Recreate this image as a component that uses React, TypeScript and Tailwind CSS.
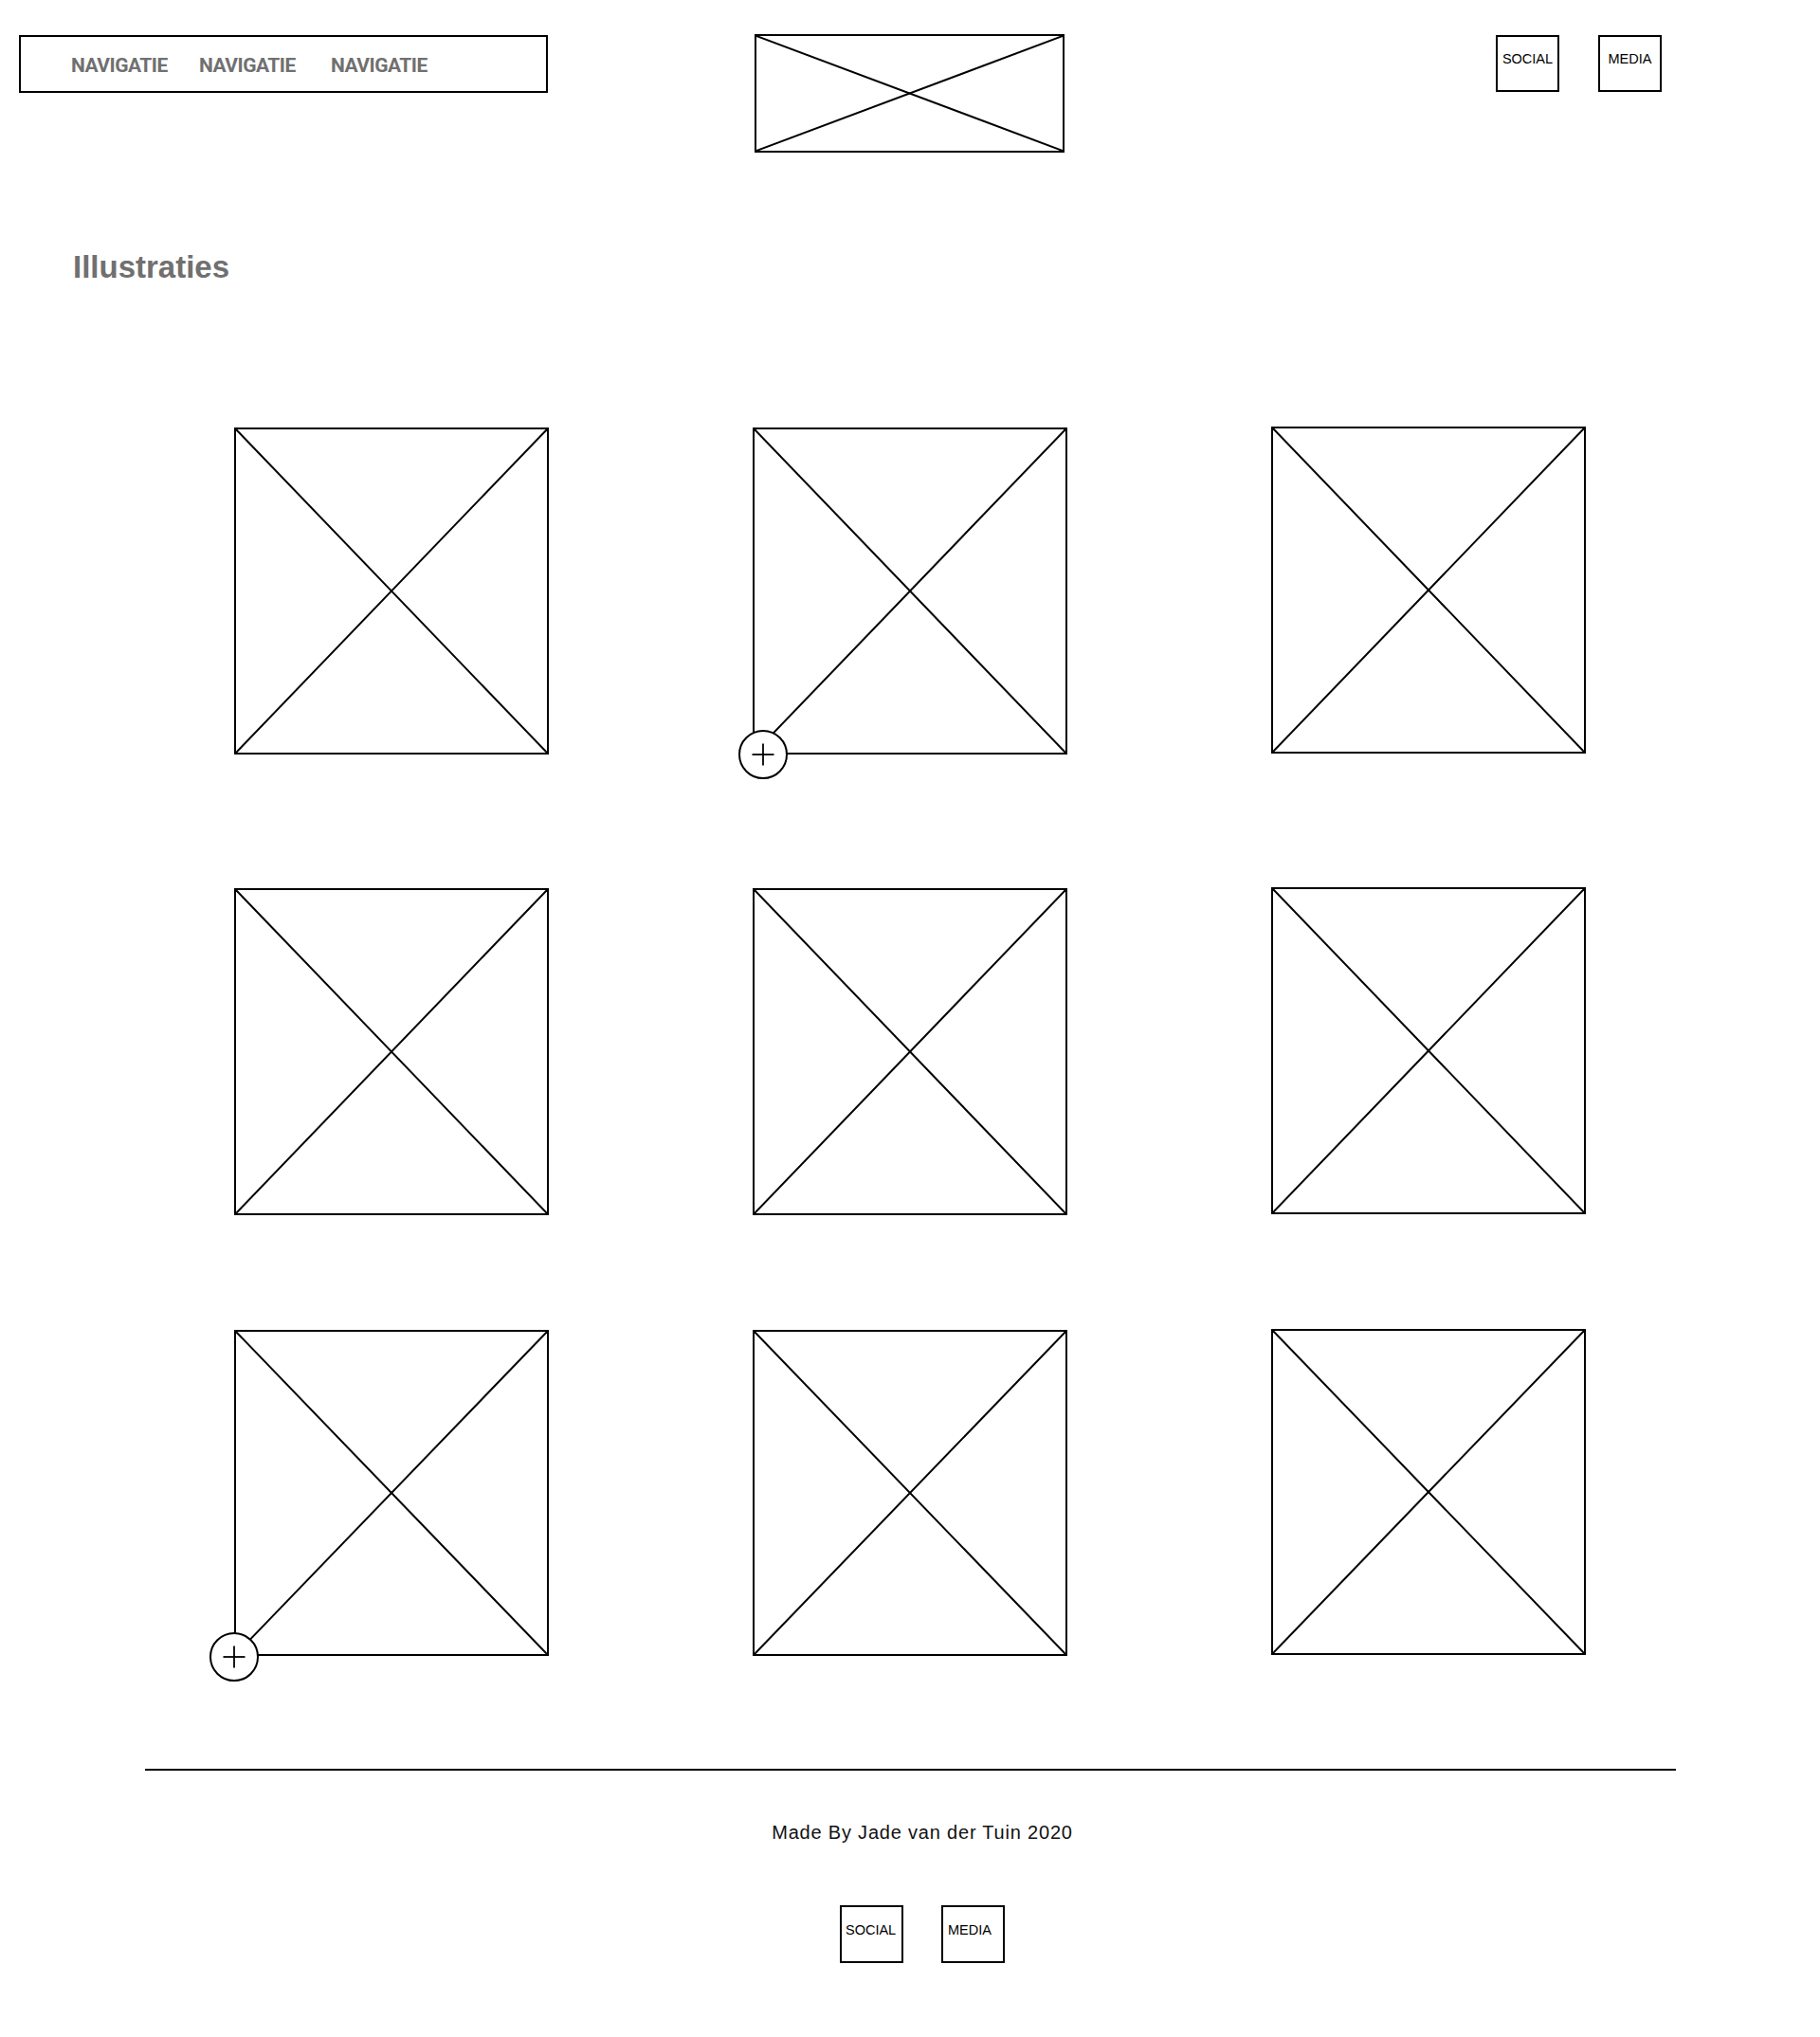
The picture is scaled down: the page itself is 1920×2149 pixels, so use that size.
import React from "react";

function XBox({ className, plus }: { className: string; plus?: "offset" | "corner" }) {
  return (
    <div className={"relative border-2 border-black bg-white " + className}>
      <svg className="block h-full w-full" viewBox="0 0 100 100" preserveAspectRatio="none">
        <line x1="0" y1="0" x2="100" y2="100" stroke="#000" strokeWidth="2" vectorEffect="non-scaling-stroke" />
        <line x1="100" y1="0" x2="0" y2="100" stroke="#000" strokeWidth="2" vectorEffect="non-scaling-stroke" />
      </svg>
      {plus && (
        <div
          className={
            "absolute flex h-[52px] w-[52px] items-center justify-center rounded-full border-2 border-black bg-white " +
            (plus === "offset" ? "left-[-17px] bottom-[-28px]" : "left-[-28px] bottom-[-29px]")
          }
        >
          <svg width="26" height="26" viewBox="0 0 26 26">
            <line x1="1.5" y1="13" x2="24.5" y2="13" stroke="#000" strokeWidth="1.8" />
            <line x1="13" y1="1.5" x2="13" y2="24.5" stroke="#000" strokeWidth="1.8" />
          </svg>
        </div>
      )}
    </div>
  );
}

function SmallBox({ label, className }: { label: string; className: string }) {
  return (
    <div
      className={"flex border-2 border-black text-[14.5px] leading-[17px] text-black " + className}
      style={{ fontFamily: '"Liberation Sans", Arial, sans-serif' }}
    >
      {label}
    </div>
  );
}

export default function App() {
  const rows = [
    ["h-[345px]", "mt-[153px]"],
    ["h-[345px]", "mt-[141px]"],
    ["h-[344px]", "mt-[121px]"],
  ];
  const nav = { fontFamily: "Roboto, sans-serif" };
  return (
    <div className="min-h-[2149px] w-[1920px] bg-white" style={{ fontFamily: '"Liberation Sans", Arial, sans-serif' }}>
      {/* Header */}
      <div className="flex items-start pl-[20px]">
        <div className="mt-[37px] flex h-[61px] w-[558px] items-center border-2 border-black pl-[53px] pt-[5px]">
          <span className="w-[135px] text-[21px] font-bold tracking-[-0.5px] text-[#707070]" style={nav}>NAVIGATIE</span>
          <span className="w-[139px] text-[21px] font-bold tracking-[-0.5px] text-[#707070]" style={nav}>NAVIGATIE</span>
          <span className="text-[21px] font-bold tracking-[-0.5px] text-[#707070]" style={nav}>NAVIGATIE</span>
        </div>
        <div className="ml-[218px] mt-[36px] h-[125px] w-[327px] border-2 border-black">
          <svg className="block h-full w-full" viewBox="0 0 100 100" preserveAspectRatio="none">
            <line x1="0" y1="0" x2="100" y2="100" stroke="#000" strokeWidth="2" vectorEffect="non-scaling-stroke" />
            <line x1="100" y1="0" x2="0" y2="100" stroke="#000" strokeWidth="2" vectorEffect="non-scaling-stroke" />
          </svg>
        </div>
        <SmallBox label="SOCIAL" className="ml-[455px] mt-[37px] h-[60px] w-[67px] items-center justify-center pb-[9px]" />
        <SmallBox label="MEDIA" className="ml-[41px] mt-[37px] h-[60px] w-[67px] items-center justify-center pb-[9px]" />
      </div>

      {/* Heading */}
      <h1 className="ml-[77px] mt-[104px] text-[33px] font-bold leading-[33px] text-[#707070]">Illustraties</h1>

      {/* Grid */}
      <div className="flex flex-col pl-[247px]">
        {rows.map(([h, mt], r) => (
          <div key={r} className={"grid grid-cols-[332px_332px_332px] gap-x-[215px] " + mt}>
            <XBox className={h} plus={r === 2 ? "corner" : undefined} />
            <XBox className={h} plus={r === 0 ? "offset" : undefined} />
            <XBox className={h + " -mt-px"} />
          </div>
        ))}
      </div>

      {/* Footer */}
      <div className="ml-[153px] mt-[119px] h-[2px] w-[1615px] bg-black" />
      <div className="flex flex-col items-center pl-[26px] pb-[78px]">
        <p className="mt-[53px] text-[20px] leading-[24px] tracking-[0.8px] text-[#111]">Made By Jade van der Tuin 2020</p>
        <div className="mt-[65px] flex gap-[40px]">
          <SmallBox label="SOCIAL" className="h-[61px] w-[67px] items-center pl-[4px] pb-[8px]" />
          <SmallBox label="MEDIA" className="h-[61px] w-[67px] items-center pl-[5px] pb-[8px]" />
        </div>
      </div>
    </div>
  );
}
